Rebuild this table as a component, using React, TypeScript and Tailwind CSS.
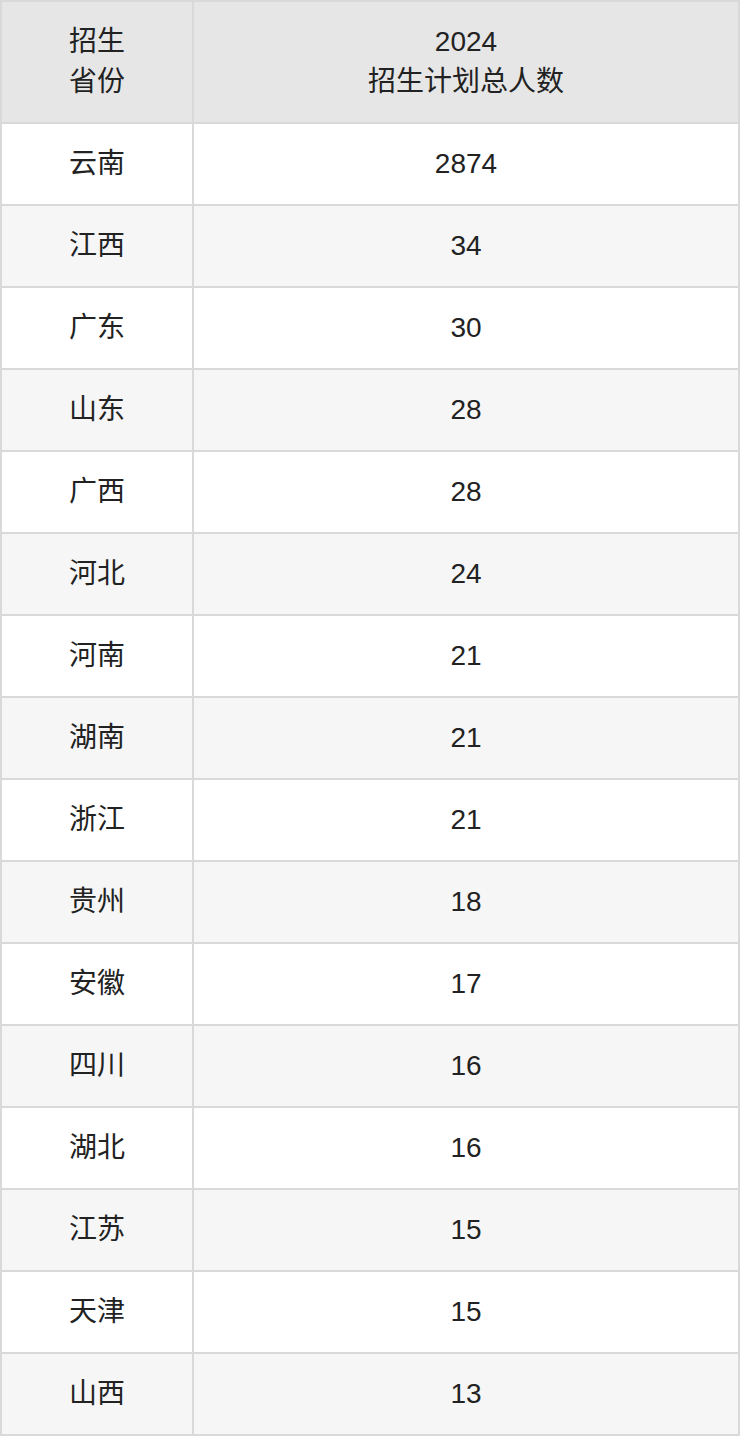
const rows: [string, string][] = [
  ["云南", "2874"],
  ["江西", "34"],
  ["广东", "30"],
  ["山东", "28"],
  ["广西", "28"],
  ["河北", "24"],
  ["河南", "21"],
  ["湖南", "21"],
  ["浙江", "21"],
  ["贵州", "18"],
  ["安徽", "17"],
  ["四川", "16"],
  ["湖北", "16"],
  ["江苏", "15"],
  ["天津", "15"],
  ["山西", "13"],
];

export default function App() {
  return (
    <div
      className="w-[740px] bg-white text-[28px] leading-[40px] text-[#222]"
      style={{ fontFamily: '"Liberation Sans", "Noto Sans CJK SC", sans-serif' }}
    >
      <div className="border-2 border-[#d9d9d9]">
        <div className="flex h-[120px] bg-[#e6e6e6]">
          <div className="w-[192px] border-r-2 border-[#d9d9d9] flex flex-col items-center justify-center text-center">
            <span>招生</span>
            <span>省份</span>
          </div>
          <div className="flex-1 flex flex-col items-center justify-center text-center">
            <span>2024</span>
            <span>招生计划总人数</span>
          </div>
        </div>
        {rows.map(([prov, num], i) => (
          <div
            key={prov + i}
            className={
              "flex h-[82px] border-t-2 border-[#d9d9d9] " +
              (i % 2 === 1 ? "bg-[#f6f6f6]" : "bg-white")
            }
          >
            <div className="w-[192px] border-r-2 border-[#d9d9d9] flex items-center justify-center">
              {prov}
            </div>
            <div className="flex-1 flex items-center justify-center">{num}</div>
          </div>
        ))}
      </div>
    </div>
  );
}
